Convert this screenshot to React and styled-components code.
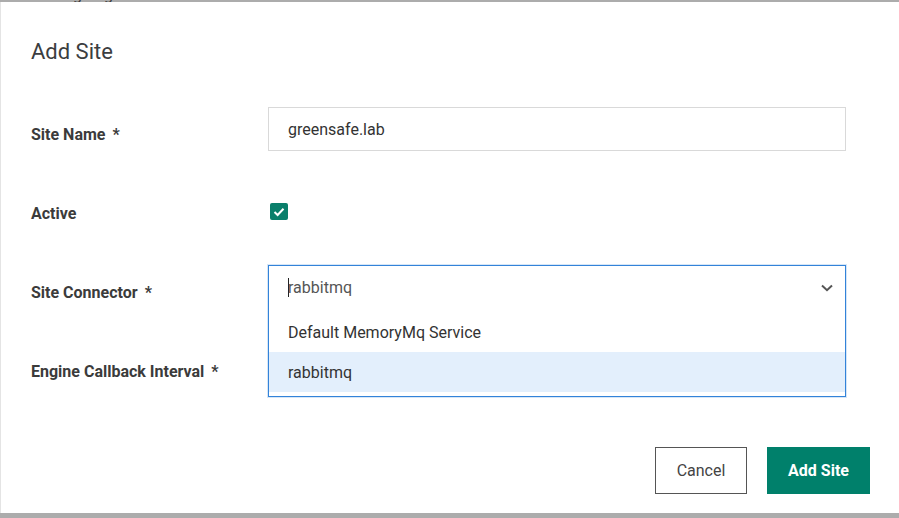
import React from 'react'
import styled, { createGlobalStyle } from 'styled-components'

const GlobalStyle = createGlobalStyle`
  html, body {
    margin: 0;
    padding: 0;
    background: #acacac;
    font-family: Roboto, "Liberation Sans", Arial, sans-serif;
    overflow: hidden;
  }
`

const Page = styled.div`
  position: relative;
  width: 899px;
  height: 518px;
  overflow: hidden;
`

const PageHeading = styled.div`
  margin: -13px 0 0 24px;
  font-size: 16px;
  line-height: 16px;
  color: #3a3a3a;
`

const Modal = styled.div`
  position: absolute;
  top: 2px;
  left: 0;
  right: 0;
  background: #fff;
  box-shadow: inset 1px 0 0 #e4e4e4;
  padding: 36px 0 19px 0;
  box-sizing: border-box;
`

const Title = styled.h2`
  margin: 0 0 41px 31px;
  font-size: 22px;
  line-height: 28px;
  font-weight: 400;
  color: #3b3d40;
`

const Form = styled.div`
  display: grid;
  grid-template-columns: 237px 578px;
  row-gap: 35px;
  padding-left: 31px;
`

const Label = styled.div`
  padding-top: 18px;
  font-size: 16px;
  line-height: 20px;
  font-weight: 700;
  color: #3b3b3b;

  span {
    margin-left: 7px;
    font-weight: 700;
  }
`

const Field = styled.div`
  position: relative;
  height: 44px;
`

const TextInput = styled.div`
  height: 44px;
  box-sizing: border-box;
  border: 1px solid #d9d9d9;
  padding: 0 19px;
  display: flex;
  align-items: center;
  font-size: 16px;
  color: #333;
`

const Checkbox = styled.div`
  width: 18px;
  height: 17px;
  margin: 17px 0 0 2px;
  background: #0a7f6b;
  border-radius: 2px;
  display: flex;
  align-items: center;
  justify-content: center;
`

const SelectBox = styled.div`
  position: absolute;
  top: 0;
  left: 0;
  right: 0;
  z-index: 2;
  background: #fff;
  border: 1px solid #3383d9;
  box-shadow: 0 0 0 1px rgba(51, 131, 217, 0.2);
`

const Trigger = styled.div`
  height: 43px;
  display: flex;
  align-items: center;
  padding: 0 12px 0 19px;
  font-size: 16px;
  color: #555;
`

const Caret = styled.i`
  display: inline-block;
  width: 1px;
  height: 19px;
  background: #222;
  margin-right: -1px;
`

const TriggerText = styled.div`
  flex: 1;
  display: flex;
  align-items: center;
`

const Menu = styled.div`
  padding: 3px 0 4px 0;
`

const Option = styled.div`
  height: 40px;
  display: flex;
  align-items: center;
  padding: 0 19px;
  font-size: 16px;
  color: #333;
  background: ${p => (p.$active ? '#e3effc' : 'transparent')};
`

const Footer = styled.div`
  display: flex;
  justify-content: flex-end;
  gap: 20px;
  margin-top: 59px;
  padding-right: 29px;
`

const Button = styled.button`
  height: 47px;
  box-sizing: border-box;
  font-family: inherit;
  font-size: 16px;
  cursor: pointer;
  border-radius: 0;
  ${p =>
    p.$primary
      ? `
    width: 103px;
    background: #00806b;
    border: 1px solid #00806b;
    color: #fff;
    font-weight: 700;
  `
      : `
    width: 92px;
    background: #fff;
    border: 1px solid #555;
    color: #444;
    font-weight: 400;
  `}
`

const Chevron = () => (
  <svg width="12" height="8" viewBox="0 0 12 8">
    <polyline points="1,1.5 6,6.2 11,1.5" fill="none" stroke="#555" strokeWidth="2" />
  </svg>
)

const Check = () => (
  <svg width="12" height="10" viewBox="0 0 12 10">
    <polyline points="1.5,5 4.6,8 10.5,1.8" fill="none" stroke="#fff" strokeWidth="2" />
  </svg>
)

export default function App() {
  return (
    <Page>
      <GlobalStyle />
      <PageHeading>Pending Engines</PageHeading>
      <Modal>
        <Title>Add Site</Title>
        <Form>
          <Label>Site Name<span>*</span></Label>
          <Field>
            <TextInput>greensafe.lab</TextInput>
          </Field>

          <Label>Active</Label>
          <Field>
            <Checkbox><Check /></Checkbox>
          </Field>

          <Label>Site Connector<span>*</span></Label>
          <Field>
            <SelectBox>
              <Trigger>
                <TriggerText><Caret />rabbitmq</TriggerText>
                <Chevron />
              </Trigger>
              <Menu>
                <Option>Default MemoryMq Service</Option>
                <Option $active>rabbitmq</Option>
              </Menu>
            </SelectBox>
          </Field>

          <Label>Engine Callback Interval<span>*</span></Label>
          <Field>
            <TextInput />
          </Field>
        </Form>
        <Footer>
          <Button>Cancel</Button>
          <Button $primary>Add Site</Button>
        </Footer>
      </Modal>
    </Page>
  )
}
